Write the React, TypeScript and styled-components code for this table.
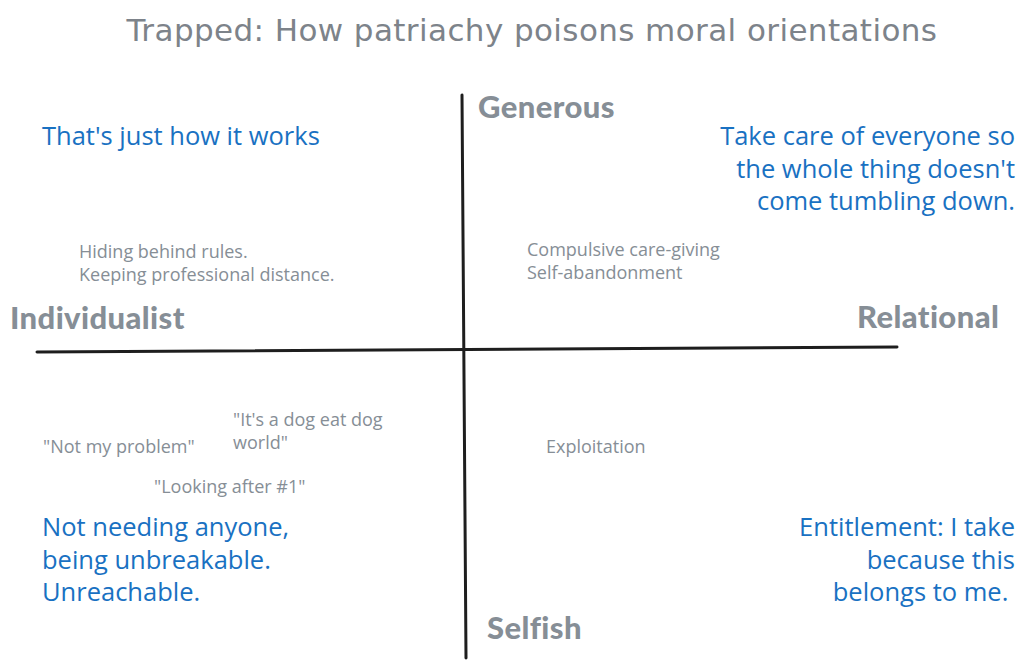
import styled, { createGlobalStyle } from "styled-components";

const GlobalStyle = createGlobalStyle`
    html, body {
        margin: 0;
        padding: 0;
        background: #ffffff;
    }
`;

// 다이어그램 캔버스 (자유 배치)
const Canvas = styled.div`
    position: relative;
    width: 1024px;
    height: 668px;
    overflow: hidden;
    background: #ffffff;
    font-family: "Open Sans", Lato, sans-serif;
`;

const Title = styled.h1`
    margin: 0;
    padding: 12px 0 0 40px;
    text-align: center;
    font-family: "DejaVu Sans", sans-serif;
    font-weight: 400;
    font-size: 31px;
    line-height: 36px;
    letter-spacing: 0.4px;
    color: #7d838a;
`;

const Axes = styled.svg`
    position: absolute;
    left: 0;
    top: 0;
`;

const AxisLabel = styled.div<{ $x: number; $y: number }>`
    position: absolute;
    left: ${p => p.$x}px;
    top: ${p => p.$y}px;
    font-family: Lato, sans-serif;
    font-weight: 900;
    font-size: 31px;
    line-height: 36px;
    letter-spacing: 0.4px;
    color: #868e96;
    white-space: nowrap;
`;

const Note = styled.div<{ $x: number; $y: number; $right?: boolean; $tone: "blue" | "gray" }>`
    position: absolute;
    top: ${p => p.$y}px;
    ${p => (p.$right ? `right: ${1024 - p.$x}px; text-align: right;` : `left: ${p.$x}px;`)}
    font-size: ${p => (p.$tone === "blue" ? 25.5 : 18)}px;
    line-height: ${p => (p.$tone === "blue" ? 32.5 : 22.5)}px;
    color: ${p => (p.$tone === "blue" ? "#1971c2" : "#868e96")};
    white-space: pre;
`;

export default function App() {
    return (
        <>
            <GlobalStyle />
            <Canvas>
                <Title>Trapped: How patriachy poisons moral orientations</Title>

                <Axes width="1024" height="668" viewBox="0 0 1024 668">
                    <path d="M462 95 Q463 380 466 658" stroke="#1e1e1e" strokeWidth="3" fill="none" strokeLinecap="round" />
                    <path d="M37 352 Q460 350 897 347" stroke="#1e1e1e" strokeWidth="3" fill="none" strokeLinecap="round" />
                </Axes>

                <AxisLabel $x={478} $y={88}>Generous</AxisLabel>
                <AxisLabel $x={10} $y={299}>Individualist</AxisLabel>
                <AxisLabel $x={857} $y={298}>Relational</AxisLabel>
                <AxisLabel $x={487} $y={609}>Selfish</AxisLabel>

                <Note $tone="blue" $x={42} $y={119}>That's just how it works</Note>
                <Note $tone="gray" $x={79} $y={240}>{"Hiding behind rules.\nKeeping professional distance."}</Note>

                <Note $tone="blue" $right $x={1015} $y={119}>
                    {"Take care of everyone so\nthe whole thing doesn't\ncome tumbling down."}
                </Note>
                <Note $tone="gray" $x={527} $y={238}>{"Compulsive care-giving\nSelf-abandonment"}</Note>

                <Note $tone="gray" $x={233} $y={408}>{"\"It's a dog eat dog\nworld\""}</Note>
                <Note $tone="gray" $x={43} $y={435}>{"\"Not my problem\""}</Note>
                <Note $tone="gray" $x={154} $y={475}>{"\"Looking after #1\""}</Note>
                <Note $tone="blue" $x={42} $y={510}>
                    {"Not needing anyone,\nbeing unbreakable.\nUnreachable."}
                </Note>

                <Note $tone="gray" $x={546} $y={435}>Exploitation</Note>
                <Note $tone="blue" $right $x={1015} $y={510}>
                    {"Entitlement: I take\nbecause this\nbelongs to me. "}
                </Note>
            </Canvas>
        </>
    );
}
